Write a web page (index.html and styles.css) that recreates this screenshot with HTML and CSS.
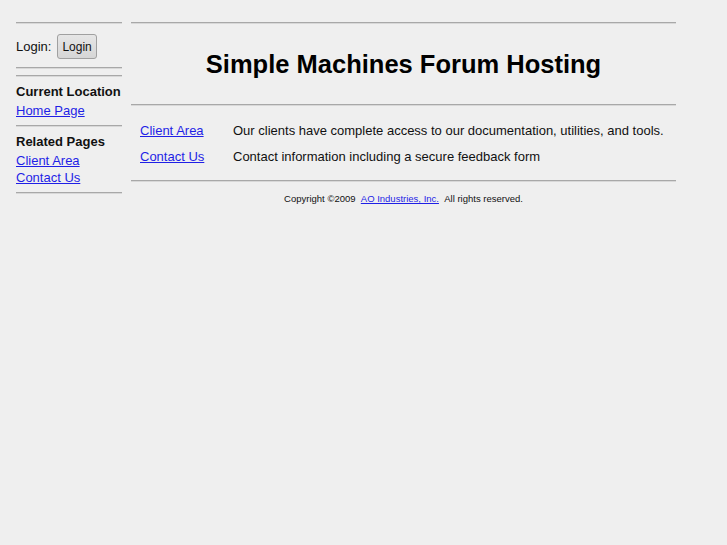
FILE: index.html
```html
<!DOCTYPE html>
<html>
<head>
<meta charset="utf-8">
<title>Simple Machines Forum Hosting</title>
<link rel="stylesheet" href="styles.css">
</head>
<body>
<div class="page">
  <div class="side">
    <div class="rule"></div>
    <div class="login">Login: <button class="btn">Login</button></div>
    <div class="rule"></div>
    <div class="rule gap"></div>
    <div class="section">
      <div class="head">Current Location</div>
      <a class="link" href="#">Home Page</a>
    </div>
    <div class="rule"></div>
    <div class="section related">
      <div class="head">Related Pages</div>
      <a class="link" href="#">Client Area</a>
      <a class="link" href="#">Contact Us</a>
    </div>
    <div class="rule"></div>
  </div>
  <div class="main">
    <div class="rule"></div>
    <h1 class="title">Simple Machines Forum Hosting</h1>
    <div class="rule"></div>
    <div class="rows">
      <div class="row"><a class="rlink" href="#">Client Area</a><span class="desc">Our clients have complete access to our documentation, utilities, and tools.</span></div>
      <div class="row"><a class="rlink" href="#">Contact Us</a><span class="desc">Contact information including a secure feedback form</span></div>
    </div>
    <div class="rule"></div>
    <div class="copy">Copyright &copy;2009 &nbsp;<a href="#">AO Industries, Inc.</a> &nbsp;All rights reserved.</div>
  </div>
</div>
</body>
</html>
```
FILE: styles.css
```css
html, body {
  margin: 0;
  padding: 0;
  background: #efefef;
}
body {
  font-family: "Liberation Sans", Arial, sans-serif;
  font-size: 13px;
  color: #111;
}
.page {
  display: flex;
  align-items: flex-start;
  padding: 22px 0 0 16px;
  gap: 9px;
}
.side {
  width: 106px;
  display: flex;
  flex-direction: column;
}
.main {
  width: 545px;
  display: flex;
  flex-direction: column;
}
.rule {
  border-top: 1px solid #a8a8a8;
  border-bottom: 1px solid #d8d8d8;
  height: 0;
}
.rule.gap {
  margin-top: 6px;
}
.login {
  display: flex;
  align-items: center;
  gap: 6px;
  padding: 10px 0 8px;
}
.btn {
  font-family: "Liberation Sans", Arial, sans-serif;
  font-size: 12px;
  height: 25px;
  padding: 0 4px;
  color: #111;
  background: linear-gradient(#e6e6e6, #d6d6d6);
  border: 1px solid #a0a0a0;
  border-radius: 3px;
}
.section {
  display: flex;
  flex-direction: column;
  padding: 4.5px 0 6px;
}
.section.related {
  padding-top: 5.5px;
}
.head {
  font-weight: bold;
  line-height: 19px;
}
.section .head + .link {
  margin-top: 1px;
}
.link, .rlink, .copy a {
  color: #1f1fe6;
  text-decoration: underline;
}
.link {
  line-height: 17px;
}
.title {
  margin: 0;
  padding: 25px 0 24px;
  font-size: 25.5px;
  line-height: 31px;
  font-weight: bold;
  text-align: center;
  color: #000;
}
.rows {
  padding: 11px 0 11px;
}
.row {
  display: flex;
  align-items: center;
  height: 26px;
}
.rlink {
  width: 93px;
  padding-left: 9px;
  flex-shrink: 0;
}
.desc {
  white-space: nowrap;
}
.copy {
  font-size: 9.5px;
  text-align: center;
  padding-top: 11px;
}
```
